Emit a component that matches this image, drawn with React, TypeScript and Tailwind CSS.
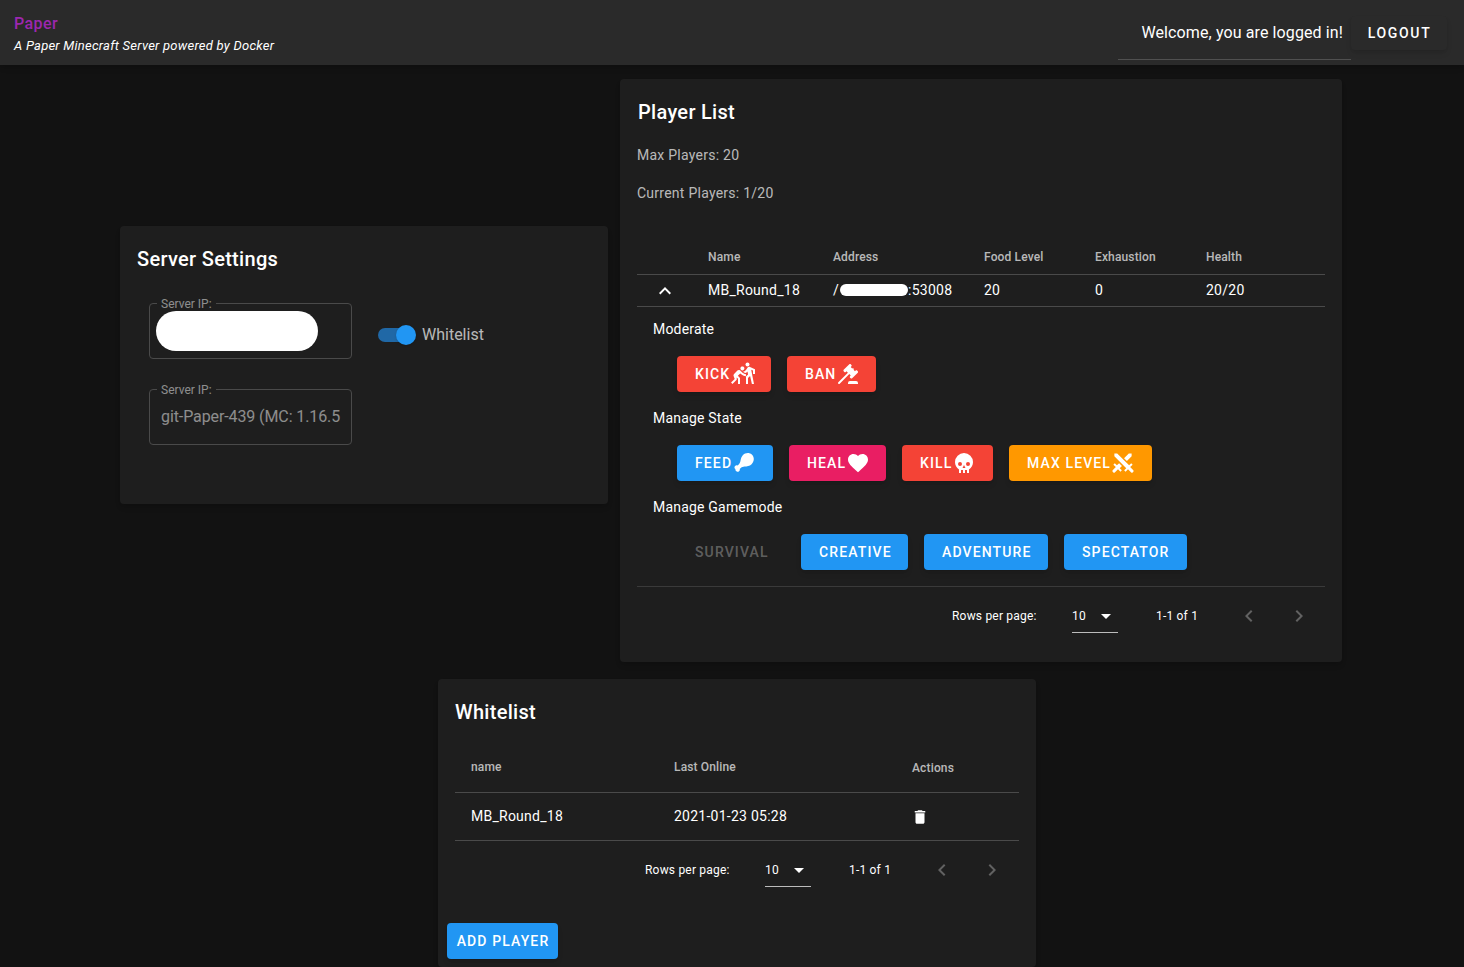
import type { ReactNode } from "react";
import {
  MdArrowDropDown,
  MdChevronLeft,
  MdChevronRight,
  MdDelete,
  MdFavorite,
  MdKeyboardArrowUp,
  MdSportsKabaddi,
} from "react-icons/md";

function MdiIcon({ d, className }: { d: string; className?: string }) {
  return (
    <svg viewBox="0 0 24 24" fill="currentColor" className={`h-6 w-6 shrink-0 ${className ?? ""}`}>
      <path d={d} />
    </svg>
  );
}

const gavelPath =
  "M2.3,20.28L11.9,10.68L10.5,9.26L9.78,9.97C9.39,10.36 8.76,10.36 8.37,9.97L7.66,9.26C7.27,8.87 7.27,8.24 7.66,7.85L13.32,2.19C13.71,1.8 14.34,1.8 14.73,2.19L15.44,2.9C15.83,3.29 15.83,3.92 15.44,4.31L14.73,5L16.15,6.43C16.54,6.04 17.17,6.04 17.56,6.43C17.95,6.82 17.95,7.46 17.56,7.85L18.97,9.26L19.68,8.56C20.07,8.17 20.71,8.17 21.1,8.56L21.8,9.26C22.19,9.65 22.19,10.29 21.8,10.68L16.15,16.33C15.76,16.72 15.12,16.72 14.73,16.33L14.03,15.63C13.63,15.24 13.63,14.6 14.03,14.21L14.73,13.5L13.32,12.09L3.71,21.7C3.32,22.09 2.69,22.09 2.3,21.7C1.91,21.31 1.91,20.67 2.3,20.28M20,19A2,2 0 0,1 22,21V22H12V21A2,2 0 0,1 14,19H20Z";
const drumstickPath =
  "M19.8 3.6C17.4 1.3 13.2 1.6 10.6 4.4C8.6 6.6 8.8 9.2 8.2 11C7.8 12.2 7 13.2 6 14.2L5.6 14.6C4.8 14.2 3.8 14.3 3.1 15C2.1 16 2.3 17.5 3.4 18.1C3.2 19.3 4 20.5 5.2 20.8C6.4 21.1 7.6 20.2 7.8 19C7.9 18.6 7.9 18.3 7.7 17.9L8.8 17C10 16 11 15.6 12.6 15.5C14.8 15.4 17.6 15.2 19.6 13.2C22.4 10.4 22.6 6.3 19.8 3.6Z";
const skullPath =
  "M12,2A9,9 0 0,0 3,11C3,14.03 4.53,16.82 7,18.47V22H9V19H11V22H13V19H15V22H17V18.46C19.47,16.81 21,14 21,11A9,9 0 0,0 12,2M8,11A2,2 0 0,1 10,13A2,2 0 0,1 8,15A2,2 0 0,1 6,13A2,2 0 0,1 8,11M16,11A2,2 0 0,1 18,13A2,2 0 0,1 16,15A2,2 0 0,1 14,13A2,2 0 0,1 16,11M12,14L13.5,17H10.5L12,14Z";
const swordCrossPath =
  "M6.2,2.44L18.1,14.34L20.22,12.22L21.63,13.63L19.16,16.1L22.34,19.28C22.73,19.67 22.73,20.3 22.34,20.69L21.63,21.4C21.24,21.79 20.61,21.79 20.22,21.4L17,18.23L14.56,20.7L13.15,19.29L15.27,17.17L3.37,5.27V2.44H6.2M15.89,10L20.63,5.26V2.44H17.8L13.06,7.18L15.89,10M10.94,15L8.11,12.13L5.9,14.34L3.78,12.22L2.37,13.63L4.84,16.1L1.66,19.29C1.27,19.68 1.27,20.31 1.66,20.7L2.37,21.41C2.76,21.8 3.39,21.8 3.78,21.41L7,18.23L9.44,20.7L10.85,19.29L8.73,17.17L10.94,15Z";

function ActionButton({
  label,
  color,
  width,
  icon,
}: {
  label: string;
  color: string;
  width: string;
  icon?: ReactNode;
}) {
  return (
    <button
      className={`flex h-9 items-center rounded pl-[18px] text-sm font-medium tracking-[0.08em] text-white shadow-md ${color} ${width}`}
    >
      {label}
      {icon}
    </button>
  );
}

function OutlinedField({ children }: { children: ReactNode }) {
  return (
    <div className="relative h-14 w-[203px] rounded border border-[#4a4a4a]">
      <span className="absolute -top-[7px] left-[7px] bg-[#1e1e1e] px-1 text-xs leading-[14px] text-white/50">
        Server IP:
      </span>
      {children}
    </div>
  );
}

function Pagination({ className }: { className: string }) {
  return (
    <div className={`flex items-center text-xs tracking-[0.2px] text-white ${className}`}>
      <span className="w-[120px] pb-[2px]">Rows per page:</span>
      <div className="relative flex h-[33px] w-[46px] items-center border-b border-white/70 pb-px text-xs">
        10
        <MdArrowDropDown className="absolute right-[0px] top-[4px] text-2xl" />
      </div>
      <span className="ml-[38px] w-[64px] pb-[2px]">1-1 of 1</span>
      <MdChevronLeft className="-mt-[2px] ml-[17px] text-2xl text-white/30" />
      <MdChevronRight className="-mt-[2px] ml-[26px] text-2xl text-white/30" />
    </div>
  );
}

function ServerSettings() {
  return (
    <div className="mb-3 h-[278px] w-[488px] rounded bg-[#1e1e1e] p-[17px] shadow-md">
      <h2 className="mt-[3px] text-xl font-medium leading-[27px] tracking-[0.3px] text-white">Server Settings</h2>
      <div className="ml-3 mt-[30px] flex items-start">
        <div className="flex flex-col gap-[30px]">
          <OutlinedField>
            <div className="ml-[6px] mt-[7px] h-10 w-[162px] rounded-full bg-white" />
          </OutlinedField>
          <OutlinedField>
            <div className="whitespace-nowrap pl-[11px] pt-[17px] text-base leading-5 tracking-[-0.1px] text-white/50">
              git-Paper-439 (MC: 1.16.5
            </div>
          </OutlinedField>
        </div>
        <div className="ml-[26px] mt-[20px] flex items-center">
          <div className="relative h-[14px] w-[34px] rounded-full bg-[#2068a6]">
            <div className="absolute -top-[3px] left-[18px] h-5 w-5 rounded-full bg-[#2196f3] shadow" />
          </div>
          <span className="ml-[10px] text-base text-white/70">Whitelist</span>
        </div>
      </div>
    </div>
  );
}

function PlayerList() {
  return (
    <div className="h-[583px] w-[722px] rounded bg-[#1e1e1e] p-[17px] shadow-md">
      <h2 className="ml-px mt-[3px] text-xl font-medium leading-[27px] tracking-[0.3px] text-white">Player List</h2>
      <p className="mt-[19px] text-sm leading-5 tracking-[0.25px] text-white/70">Max Players: 20</p>
      <p className="mt-[18px] text-sm leading-5 tracking-[0.25px] text-white/70">Current Players: 1/20</p>

      <div className="mt-[36px] grid h-[36px] grid-cols-[71px_125px_151px_111px_111px_1fr] items-center border-b border-[#4a4a4a] text-xs font-medium tracking-[0.15px] text-white/70">
        <span />
        <span>Name</span>
        <span>Address</span>
        <span>Food Level</span>
        <span>Exhaustion</span>
        <span>Health</span>
      </div>
      <div className="grid h-[32px] grid-cols-[71px_125px_151px_111px_111px_1fr] items-center border-b border-[#4a4a4a] pb-[2px] text-sm tracking-[0.25px] text-white">
        <MdKeyboardArrowUp className="ml-[16px] mt-[2px] text-2xl" />
        <span>MB_Round_18</span>
        <span className="flex items-center">
          /<span className="ml-px h-3 w-[68px] rounded-full bg-white" />:53008
        </span>
        <span>20</span>
        <span>0</span>
        <span>20/20</span>
      </div>

      <div className="border-b border-[#3a3a3a] pb-4 pl-4 text-sm tracking-[0.2px] text-white">
        <p className="mt-[12px] leading-5">Moderate</p>
        <div className="ml-6 mt-[17px] flex gap-4">
          <ActionButton label="KICK" color="bg-[#f44336]" width="w-[94px]" icon={<MdSportsKabaddi className="ml-px text-2xl" />} />
          <ActionButton label="BAN" color="bg-[#f44336]" width="w-[89px]" icon={<MdiIcon d={gavelPath} />} />
        </div>
        <p className="mt-[16px] leading-5">Manage State</p>
        <div className="ml-6 mt-[17px] flex gap-4">
          <ActionButton label="FEED" color="bg-[#2196f3]" width="w-[96px]" icon={<MdiIcon d={drumstickPath} />} />
          <ActionButton label="HEAL" color="bg-[#e91e63]" width="w-[97px]" icon={<MdFavorite className="text-2xl" />} />
          <ActionButton label="KILL" color="bg-[#f44336]" width="w-[91px]" icon={<MdiIcon d={skullPath} />} />
          <ActionButton label="MAX LEVEL" color="bg-[#ff9800]" width="w-[143px]" icon={<MdiIcon d={swordCrossPath} />} />
        </div>
        <p className="mt-[16px] leading-5">Manage Gamemode</p>
        <div className="ml-6 mt-[17px] flex gap-4">
          <button className="flex h-9 w-[108px] items-center pl-[18px] text-sm font-medium tracking-[0.08em] text-white/30">SURVIVAL</button>
          <ActionButton label="CREATIVE" color="bg-[#2196f3]" width="w-[107px]" />
          <ActionButton label="ADVENTURE" color="bg-[#2196f3]" width="w-[124px]" />
          <ActionButton label="SPECTATOR" color="bg-[#2196f3]" width="w-[123px]" />
        </div>
      </div>
      <Pagination className="ml-[315px] mt-[13px]" />
    </div>
  );
}

function Whitelist() {
  return (
    <div className="ml-[318px] mt-[17px] h-[288px] w-[598px] rounded bg-[#1e1e1e] p-[17px] shadow-md">
      <h2 className="mt-[3px] text-xl font-medium leading-[27px] tracking-[0.3px] text-white">Whitelist</h2>
      <div className="mt-[15px] grid h-[52px] grid-cols-[203px_238px_1fr] items-center border-b border-[#4a4a4a] pl-4 text-xs font-medium tracking-[0.15px] text-white/70">
        <span>name</span>
        <span>Last Online</span>
        <span className="pt-[2px]">Actions</span>
      </div>
      <div className="grid h-12 grid-cols-[203px_238px_1fr] items-center border-b border-[#4a4a4a] pb-[2px] pl-4 text-sm tracking-[0.25px] text-white">
        <span>MB_Round_18</span>
        <span>2021-01-23 05:28</span>
        <MdDelete className="-ml-px mt-[3px] text-lg" />
      </div>
      <Pagination className="ml-[190px] mt-[13px]" />
      <button className="-ml-2 mt-[36px] flex h-9 w-[111px] items-center justify-center rounded bg-[#2196f3] pl-px text-sm font-medium tracking-[0.08em] text-white shadow-md">
        ADD PLAYER
      </button>
    </div>
  );
}

export default function App() {
  return (
    <div className="h-[967px] overflow-hidden bg-[#121212] font-['Roboto',sans-serif]">
      <header className="flex h-[65px] items-start justify-between bg-[#2a2a2a] pl-[14px] pr-[17px] shadow-md">
        <div>
          <div className="mt-[14px] text-base font-medium leading-5 tracking-[0.4px] text-[#9c27b0]">Paper</div>
          <div className="mt-[2px] text-[13px] italic leading-5 tracking-[0.24px] text-white">
            A Paper Minecraft Server powered by Docker
          </div>
        </div>
        <div className="mt-[16px] flex items-start">
          <div className="flex h-[44px] w-[233px] justify-end border-b border-[#505050] pr-2 pt-[7px] text-base leading-5 tracking-[0.11px] text-white">
            Welcome, you are logged in!
          </div>
          <button className="h-[34px] w-[96px] rounded bg-[#2a2a2a] pl-px text-sm font-medium tracking-[0.12em] text-white shadow-md">
            LOGOUT
          </button>
        </div>
      </header>
      <main className="pl-[120px] pt-[14px]">
        <div className="flex items-center gap-3">
          <ServerSettings />
          <PlayerList />
        </div>
        <Whitelist />
      </main>
    </div>
  );
}
